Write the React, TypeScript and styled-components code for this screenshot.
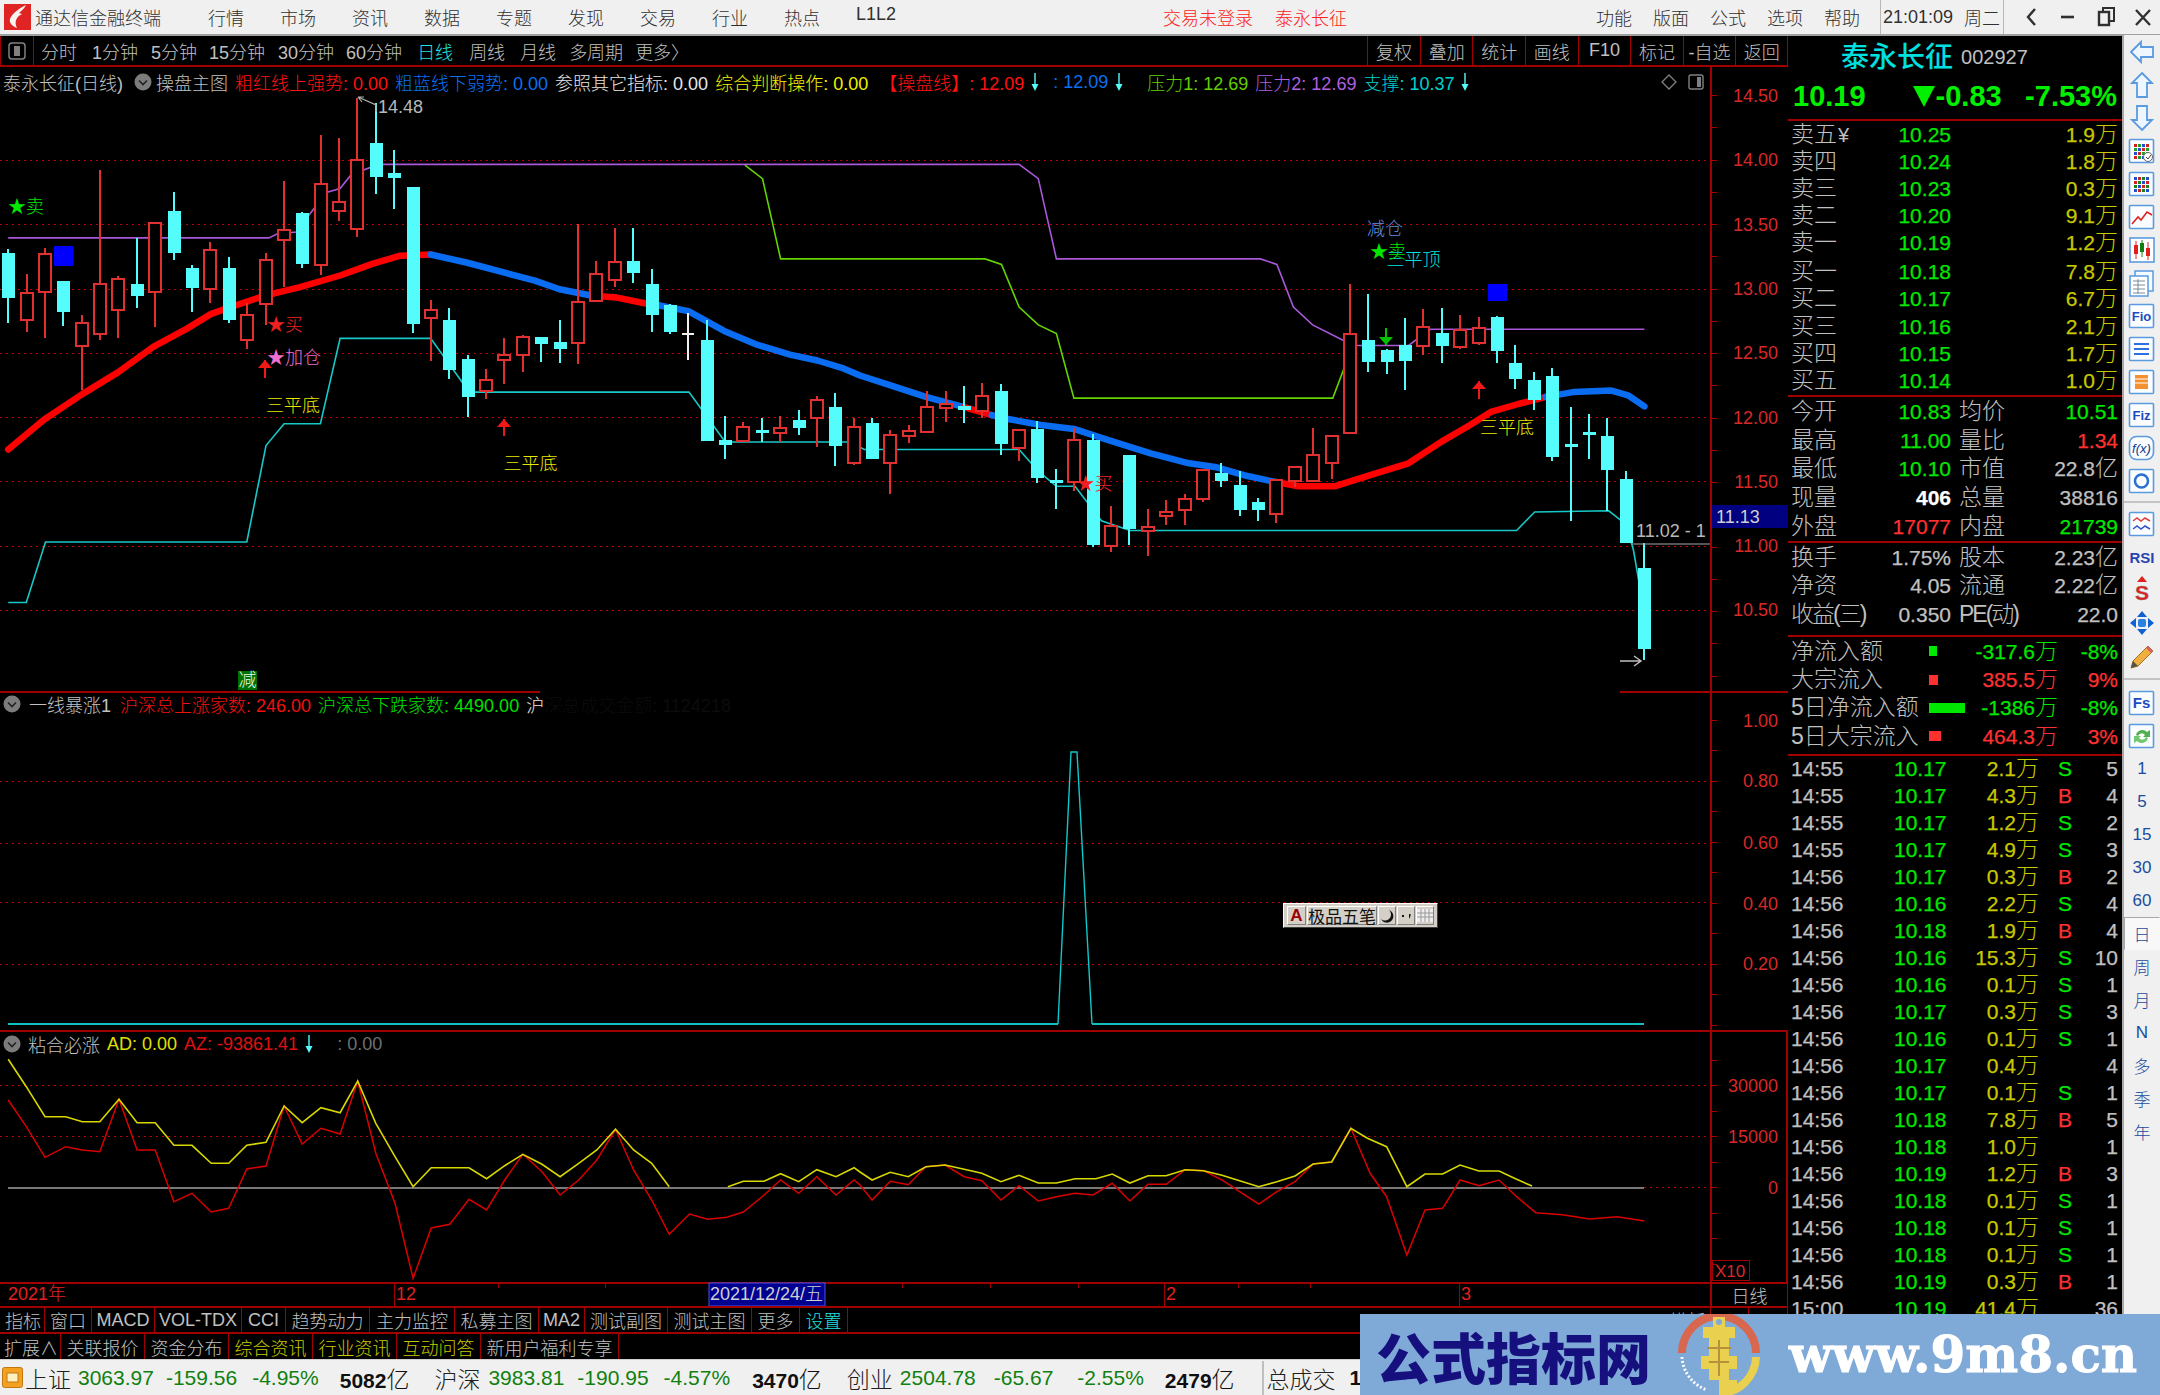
import React from 'react';
import styled, { createGlobalStyle } from 'styled-components';

const FONT = `"Liberation Sans", "Noto Sans CJK SC", sans-serif`;
const DARK_RED = '#a00000';
const GRAY = '#c0c0c0';
const GREEN = '#00e800';
const YELLOW = '#c8c800';
const RED = '#ff3030';
const CYAN = '#54fcfc';

const GlobalStyle = createGlobalStyle`
  html, body { margin: 0; padding: 0; background: #000; }
  body { font-family: ${FONT}; font-weight: 300; }
  svg { display: block; }
`;

const Screen = styled.div`
  position: relative;
  width: 2160px;
  height: 1395px;
  overflow: hidden;
  display: flex;
  flex-direction: column;
  background: #000;
`;

/* ---------- title bar ---------- */
const TitleBar = styled.div`
  height: 34px;
  flex: none;
  display: flex;
  align-items: center;
  background: #f0f0f0;
  border-bottom: 2px solid #a0a0a0;
  font-size: 18px;
  color: #303030;
`;
const AppName = styled.span`
  margin-left: 4px;
  width: 137px;
`;
const MenuList = styled.div`
  display: flex;
  gap: 36px;
  margin-left: 36px;
`;
const MenuItem = styled.span`
  width: 36px;
  white-space: nowrap;
`;
const LoginNote = styled.span<{ $ml: number }>`
  color: #ff2020;
  margin-left: ${(p) => p.$ml}px;
  white-space: nowrap;
`;
const RightCluster = styled.div`
  margin-left: auto;
  display: flex;
  align-items: center;
  height: 100%;
`;
const SideMenu = styled.div`
  display: flex;
  gap: 21px;
  margin-right: 20px;
`;
const ClockBox = styled.div`
  height: 100%;
  width: 124px;
  box-sizing: border-box;
  display: flex;
  align-items: center;
  gap: 11px;
  padding-left: 2px;
  border-left: 1px solid #b8b8b8;
  border-right: 1px solid #b8b8b8;
  white-space: nowrap;
`;
const WindowButtons = styled.div`
  width: 156px;
  display: flex;
  justify-content: flex-end;
  align-items: center;
`;

/* ---------- body ---------- */
const Body = styled.div`
  height: 1323px;
  flex: none;
  display: flex;
  background: #000;
`;
const MainColumn = styled.div`
  width: 1788px;
  flex: none;
  display: flex;
  flex-direction: column;
`;

const Toolbar = styled.div`
  height: 29px;
  flex: none;
  display: flex;
  align-items: center;
  border-bottom: 2px solid ${DARK_RED};
  color: ${GRAY};
  font-size: 18px;
`;
const ToolIcon = styled.div`
  width: 34px;
  height: 100%;
  flex: none;
  display: flex;
  align-items: center;
  justify-content: center;
  box-sizing: border-box;
  border-left: 1px solid ${DARK_RED};
  border-right: 1px solid ${DARK_RED};
`;
const Period = styled.span<{ $ml: number; $on?: boolean }>`
  margin-left: ${(p) => p.$ml}px;
  color: ${(p) => (p.$on ? '#20e0e0' : GRAY)};
  white-space: nowrap;
`;
const ButtonStrip = styled.div`
  margin-left: auto;
  display: flex;
  height: 100%;
`;
const StripButton = styled.div`
  width: 52.6px;
  box-sizing: border-box;
  display: flex;
  align-items: center;
  justify-content: center;
  border-left: 1px solid ${DARK_RED};
  white-space: nowrap;
  &:last-child { border-right: 1px solid ${DARK_RED}; }
`;

const Pane = styled.div<{ $h: number }>`
  position: relative;
  height: ${(p) => p.$h}px;
  flex: none;
`;
const PaneHeader = styled.div<{ $h: number; $top?: number }>`
  position: absolute;
  left: 3px;
  top: ${(p) => p.$top || 0}px;
  height: ${(p) => p.$h}px;
  display: flex;
  align-items: center;
  gap: 7px;
  font-size: 18px;
  white-space: nowrap;
`;
const Legend = styled.span<{ $c: string; $ml?: number }>`
  color: ${(p) => p.$c};
  margin-left: ${(p) => p.$ml || 0}px;
`;
const ImeBar = styled.div`
  position: absolute;
  left: 1283px;
  top: 212px;
  width: 155px;
  height: 25px;
  box-sizing: border-box;
  display: flex;
  align-items: stretch;
  gap: 1px;
  padding: 2px 3px;
  background: #d4d0c8;
  border: 1px solid;
  border-color: #fff #404040 #404040 #fff;
  color: #111;
  font-size: 17px;
`;
const ImeCell = styled.div<{ $w: number; $c?: string }>`
  width: ${(p) => p.$w}px;
  box-sizing: border-box;
  display: flex;
  align-items: center;
  justify-content: center;
  border: 1px solid;
  border-color: #fff #808080 #808080 #fff;
  color: ${(p) => p.$c || '#111'};
  font-weight: ${(p) => (p.$c ? 700 : 400)};
  white-space: nowrap;
`;

const ChartText = styled.text<{ $c: string; $s?: number }>`
  fill: ${(p) => p.$c};
  font-size: ${(p) => p.$s || 18}px;
  font-family: ${FONT};
  dominant-baseline: central;
`;

const TimeRow = styled.div`
  height: 24px;
  flex: none;
  display: flex;
`;
const TimeCell = styled.div`
  width: 78px;
  box-sizing: border-box;
  display: flex;
  align-items: center;
  justify-content: center;
  color: ${GRAY};
  font-size: 18px;
  border-top: 2px solid ${DARK_RED};
  border-left: 2px solid ${DARK_RED};
  border-right: 1px solid ${DARK_RED};
`;
const TabBar = styled.div<{ $h: number }>`
  height: ${(p) => p.$h}px;
  flex: none;
  box-sizing: border-box;
  display: flex;
  padding-left: 2px;
  border-top: 2px solid ${DARK_RED};
  font-size: 18px;
`;
const Tab = styled.div<{ $w: number; $c?: string }>`
  width: ${(p) => p.$w}px;
  box-sizing: border-box;
  display: flex;
  align-items: center;
  justify-content: center;
  color: ${(p) => p.$c || GRAY};
  border-right: 1px solid ${DARK_RED};
  white-space: nowrap;
  overflow: hidden;
`;
const TabEnd = styled.div`
  margin-left: auto;
  display: flex;
`;

/* ---------- quote panel ---------- */
const QuotePanel = styled.div`
  width: 334px;
  flex: none;
  overflow: hidden;
  display: flex;
  flex-direction: column;
  color: ${GRAY};
`;
const NameBlock = styled.div`
  height: 83px;
  flex: none;
  display: flex;
  flex-direction: column;
  border-bottom: 2px solid ${DARK_RED};
`;
const NameRow = styled.div`
  height: 38px;
  display: flex;
  align-items: center;
  padding-left: 53px;
`;
const StockName = styled.span`
  font-size: 28px;
  font-weight: 500;
  color: #00e0e0;
`;
const StockCode = styled.span`
  font-size: 20px;
  margin-left: 8px;
  margin-top: 4px;
`;
const PriceRow = styled.div`
  flex: 1;
  display: flex;
  align-items: center;
  padding: 0 5px;
  font-size: 29px;
  font-weight: 700;
  color: #00f000;
`;
const PriceChange = styled.span`
  margin-left: 47px;
  display: flex;
  align-items: center;
  gap: 1px;
  white-space: nowrap;
`;
const PricePct = styled.span`
  margin-left: auto;
`;
const Section = styled.div<{ $h: number; $line?: string }>`
  height: ${(p) => p.$h}px;
  flex: none;
  box-sizing: border-box;
  padding: 0 4px 0 3px;
  border-bottom: 2px solid ${(p) => p.$line || DARK_RED};
  ${(p) => (p.$line === 'split' ? 'border-image: linear-gradient(to right, #b08030 57%, #2a70b0 57%) 1;' : '')}
`;
const QuoteRow = styled.div<{ $h: number }>`
  height: ${(p) => p.$h}px;
  display: grid;
  grid-template-columns: 160px 159px;
  column-gap: 8px;
  align-items: center;
`;
const PairCell = styled.div`
  display: flex;
  justify-content: space-between;
  align-items: center;
  white-space: nowrap;
`;
const Caption = styled.span<{ $tight?: boolean }>`
  font-size: 23px;
  line-height: 1;
  color: ${GRAY};
  letter-spacing: ${(p) => (p.$tight ? '-2px' : 'normal')};
`;
const Num = styled.span<{ $c?: string; $bold?: boolean }>`
  font-size: 21px;
  line-height: 1;
  color: ${(p) => p.$c || GRAY};
  font-weight: ${(p) => (p.$bold ? 700 : 400)};
  -webkit-text-stroke: 0.25px ${(p) => p.$c || GRAY};
  white-space: nowrap;
`;
const Unit = styled.span`
  font-size: 23px;
  -webkit-text-stroke: 0;
  font-weight: 300;
`;
const RightNum = styled(Num)`
  justify-self: end;
`;
const Yen = styled.span`
  font-size: 20px;
  margin-left: 1px;
`;
const FlowRow = styled.div`
  height: 28.4px;
  display: grid;
  grid-template-columns: 138px 129px 1fr;
  align-items: center;
`;
const FlowMiddle = styled.div`
  display: flex;
  align-items: center;
  justify-content: space-between;
`;
const FlowBar = styled.i<{ $w: number; $c: string }>`
  display: block;
  width: ${(p) => p.$w}px;
  height: 10px;
  background: ${(p) => p.$c};
`;
const TickList = styled.div`
  padding: 0 4px 0 3px;
  margin-top: -1px;
`;
const TickRow = styled.div`
  height: 27px;
  display: grid;
  grid-template-columns: 103px 52px 93px 45px 1fr;
  align-items: center;
`;
const TickFlag = styled(Num)`
  margin-left: 19px;
`;

/* ---------- right rail ---------- */
const SideRail = styled.div`
  flex: 1;
  box-sizing: border-box;
  display: flex;
  flex-direction: column;
  background: #f0f0f0;
  border-left: 2px solid #a8a8a8;
  margin-top: -1px;
`;
const RailItem = styled.div<{ $on?: boolean }>`
  height: 33px;
  flex: none;
  display: flex;
  align-items: center;
  justify-content: center;
  font-size: 17px;
  color: #1a4c9c;
  box-sizing: border-box;
  ${(p) => (p.$on ? 'background:#f8f8f8;border:1px solid;border-color:#a8a8a8 #f8f8f8 #f8f8f8 #a8a8a8;' : '')}
`;
const RailGap = styled.div<{ $h: number }>`
  height: ${(p) => p.$h}px;
  flex: none;
  display: flex;
  align-items: center;
  &::after {
    content: '';
    display: block;
    width: 100%;
    height: 2px;
    background: #c4c4c4;
  }
`;

/* ---------- status bar ---------- */
const StatusBar = styled.div`
  height: 36px;
  flex: none;
  display: flex;
  align-items: center;
  padding-left: 2px;
  background: #f0f0f0;
  border-top: 1px solid #d0d0d0;
  box-sizing: border-box;
  white-space: nowrap;
  color: #202020;
`;
const StatusName = styled.span<{ $ml: number }>`
  font-size: 23px;
  margin-left: ${(p) => p.$ml}px;
`;
const StatusNum = styled.span<{ $ml: number; $strong?: boolean }>`
  font-size: 21px;
  margin-left: ${(p) => p.$ml}px;
  color: ${(p) => (p.$strong ? '#101010' : '#108010')};
  font-weight: ${(p) => (p.$strong ? 700 : 400)};
`;
const StatusDivider = styled.span`
  width: 2px;
  height: 34px;
  margin-left: 27px;
  margin-right: 3px;
  background: #c0c0c0;
`;

/* ---------- watermark ---------- */
const Watermark = styled.div`
  position: absolute;
  left: 1360px;
  right: 0;
  bottom: 0;
  height: 81px;
  display: flex;
  align-items: center;
  background: #7fa9d7;
  padding-left: 16px;
`;
const WaterTitle = styled.span`
  font-family: "Noto Sans CJK SC", sans-serif;
  font-size: 55px;
  font-weight: 900;
  color: #16107e;
  white-space: nowrap;
`;
const WaterUrl = styled.span`
  font-family: "DejaVu Serif", serif;
  font-size: 50px;
  font-weight: 700;
  color: #fff;
  -webkit-text-stroke: 1px #fff;
  margin-left: 28px;
  white-space: nowrap;
`;
const WaterMark = styled.svg`
  margin-left: 26px;
  flex: none;
`;

/* ---------- data, read off the chart ---------- */
const sx = (x: number) => x / 1.823;
const ex = (x: number) => 860 + x / 1.823;
const my = (y: number) => 60 + y / 2.529;
const ly = (y: number) => 1020 + y / 3;
const pts = (list: number[][], fx: (n: number) => number, fy: (n: number) => number) =>
  list.map(([x, y]) => `${fx(x).toFixed(1)},${fy(y).toFixed(1)}`).join(' ');

// kind (0 cyan, 1 red, 2 white), high, body top, body bottom, low
const CANDLES: number[][] = [
  [0,478,487,603,665],[1,540,590,658,688],[1,475,491,587,702],[0,558,558,637,672],[1,645,665,723,835],
  [1,278,567,693,707],[1,545,555,632,702],[0,450,566,598,627],[1,410,411,587,675],[0,335,383,489,505],
  [0,518,525,577,638],[1,460,480,579,615],[0,497,525,657,665],[1,615,646,709,732],[1,487,506,617,670],
  [1,305,430,454,575],[0,385,388,516,527],[1,190,313,518,543],[1,197,358,381,406],[1,95,252,427,447],
  [0,110,209,295,338],[0,228,285,299,376],[0,320,320,668,690],[1,607,632,652,760],[0,627,657,785,808],
  [0,745,755,853,903],[1,782,810,837,857],[1,702,745,758,820],[1,695,700,747,790],[0,700,700,717,763],
  [0,657,714,732,767],[1,416,612,716,770],[1,508,540,610,610],[1,425,510,556,573],[0,425,509,538,563],
  [0,528,566,645,687],[0,618,619,687,694],[2,640,692,692,758],[0,658,707,964,964],[0,900,960,974,1010],
  [1,915,928,963,963],[0,905,935,941,965],[1,900,931,944,965],[0,885,911,930,948],[1,851,859,906,978],
  [0,843,877,975,1028],[1,905,928,1020,1025],[0,905,919,1010,1010],[1,935,949,1019,1097],[1,923,939,950,968],
  [1,837,878,940,940],[1,838,870,879,915],[0,825,875,884,918],[1,816,851,887,905],[0,820,836,971,998],
  [1,935,935,982,1013],[0,912,934,1058,1070],[0,1035,1063,1071,1135],[1,930,962,1066,1090],[0,945,960,1226,1232],
  [1,1128,1178,1228,1245],[0,998,998,1186,1226],[1,1135,1182,1190,1255],[1,1112,1143,1152,1176],[1,1097,1110,1137,1176],
  [1,1037,1038,1110,1118],[0,1018,1044,1065,1080],[0,1040,1075,1138,1153],[0,1108,1117,1138,1165],[1,1060,1061,1148,1172],
  [1,1030,1030,1065,1080],[1,930,1000,1065,1065],[1,950,950,1019,1060],[1,567,692,943,943],[0,592,708,765,790],
  [0,730,733,765,793],[0,652,722,762,835],[1,630,674,723,745],[0,627,691,724,767],[1,645,682,727,732],
  [1,650,677,716,720],[0,648,649,736,767],[0,722,767,808,832],[0,790,809,860,885],[0,778,798,1005,1013],
  [0,878,972,978,1165],[0,896,942,945,1010],[0,905,952,1036,1140],[0,1040,1059,1222,1222],[0,1222,1284,1490,1518],
];

const MA_SEGMENTS: { c: string; a: number[][]; b: number[][] }[] = [
  { c: '#ff0000', a: [[15,985],[80,910],[150,845],[215,790],[280,725],[340,680],[385,642],[430,620],[470,602],[500,590],[545,575],[620,545],[680,515],[730,495],[785,492]], b: [] },
  { c: '#0a6cf0', a: [[785,492],[850,512],[920,538],[975,558],[1020,580],[1080,596]], b: [] },
  { c: '#ff0000', a: [[1080,596],[1125,601],[1175,615],[1200,620]], b: [] },
  { c: '#0a6cf0', a: [[1200,620],[1255,635],[1320,685],[1380,720],[1440,745],[1490,760]], b: [[-30,780],[0,798],[60,825],[120,852],[190,878]] },
  { c: '#ff0000', a: [], b: [[190,878],[240,898]] },
  { c: '#0a6cf0', a: [], b: [[240,898],[270,908],[330,923],[390,933],[450,960],[530,995],[600,1020],[650,1030],[700,1050],[760,1068]] },
  { c: '#ff0000', a: [], b: [[760,1068],[800,1078],[865,1078],[930,1050],[1000,1020],[1060,965],[1110,925],[1150,890],[1200,870],[1250,852]] },
  { c: '#0a6cf0', a: [], b: [[1250,852],[1300,840],[1370,836],[1400,848],[1430,876]] },
];

const toPoints = (a: number[][], b: number[][]) =>
  [pts(a, sx, my), pts(b, ex, my)].filter(Boolean).join(' ');

const PURPLE_LINE = toPoints(
  [[15,450],[490,450],[505,440],[540,435],[570,380],[595,335],[620,325],[640,290],[690,264]],
  [[290,264],[325,300],[358,503],[730,503],[760,517],[790,625],[825,670],[885,712],[905,722],[1000,722],[1040,681],[1430,681]],
);
const GREEN_LINE = toPoints(
  [[1358,266],[1390,300],[1423,503]],
  [[228,503],[258,517],[290,625],[325,670],[358,692],[390,855],[862,855],[885,770]],
);
const SUPPORT_LINE = toPoints(
  [[15,1372],[48,1372],[83,1219],[450,1219],[485,975],[518,920],[584,920],[620,704],[785,704],[840,810],[854,840],[1256,840],[1322,966]],
  [[-20,966],[8,985],[290,985],[325,1040],[358,1078],[392,1078],[440,1165],[492,1190],[1197,1190],[1230,1143],[1365,1140],[1397,1175],[1410,1240],[1420,1320]],
);

const YELLOW_A = pts([[15,118],[48,200],[82,290],[120,290],[150,305],[182,305],[217,238],[250,308],[283,308],[317,376],[350,376],[385,430],[417,430],[450,376],[485,367],[518,258],[551,308],[585,263],[620,278],[652,183],[685,310],[720,410],[753,500],[786,443],[855,443],[887,476],[920,437],[953,403],[988,433],[1021,470],[1055,430],[1088,390],[1122,328],[1155,390],[1188,430],[1220,500]], sx, ly);
const YELLOW_B = [
  pts([[1327,500],[1355,484],[1393,484],[1423,461],[1456,485],[1489,449],[1524,470],[1557,443]], sx, ly),
  pts([[0,456],[22,480],[55,457],[88,470],[120,440],[155,435],[190,448],[222,460],[257,485],[290,466],[325,489],[358,489],[392,476],[430,476],[460,462],[492,489],[525,467],[558,467],[593,449],[626,452],[660,466],[692,482],[727,500],[760,485],[793,468],[826,432],[860,426],[895,325],[925,355],[960,380],[997,500],[1030,462],[1062,462],[1094,435],[1128,453],[1165,453],[1197,478],[1225,498]], ex, ly),
].join(' ');
const RED_OSC = [
  pts([[15,240],[48,320],[82,412],[120,380],[150,390],[182,395],[217,238],[250,390],[283,390],[317,545],[350,520],[385,576],[417,565],[450,447],[485,438],[518,258],[551,372],[585,325],[620,342],[652,183],[685,400],[720,550],[753,775],[786,624],[820,613],[855,538],[887,570],[920,480],[953,403],[988,455],[1021,525],[1055,480],[1088,420],[1122,328],[1155,450],[1188,540],[1220,643],[1257,582],[1290,598],[1325,592],[1355,576],[1393,525],[1423,480],[1456,520],[1489,470],[1524,525],[1557,480]], sx, ly),
  pts([[0,495],[22,540],[55,484],[88,494],[120,440],[155,435],[190,470],[222,482],[257,540],[290,497],[325,543],[358,530],[392,520],[425,525],[460,490],[492,543],[525,493],[558,493],[593,449],[626,452],[660,480],[692,515],[727,552],[760,515],[793,485],[826,432],[860,426],[895,325],[930,460],[960,530],[997,705],[1030,570],[1062,565],[1094,480],[1128,497],[1165,480],[1197,530],[1232,578],[1280,584],[1330,597],[1380,590],[1430,603]], ex, ly),
].join(' ');

const MAIN_LABELS: [string, number][] = [['14.50',95.5],['14.00',160],['13.50',224.5],['13.00',289],['12.50',353],['12.00',417.5],['11.50',482],['11.00',546],['10.50',610]];
const VOL_LABELS: [string, number][] = [['1.00',720.5],['0.80',781],['0.60',843],['0.40',904],['0.20',964]];
const OSC_LABELS: [string, number][] = [['30000',1086],['15000',1137],['0',1188]];

const SELLS = [['卖五','10.25','1.9万'],['卖四','10.24','1.8万'],['卖三','10.23','0.3万'],['卖二','10.20','9.1万'],['卖一','10.19','1.2万']];
const BUYS = [['买一','10.18','7.8万'],['买二','10.17','6.7万'],['买三','10.16','2.1万'],['买四','10.15','1.7万'],['买五','10.14','1.0万']];
const STATS: [string, string, string, string, string, string][] = [
  ['今开','10.83',GREEN,'均价','10.51',GREEN],
  ['最高','11.00',GREEN,'量比','1.34',RED],
  ['最低','10.10',GREEN,'市值','22.8亿',GRAY],
  ['现量','406','#fff','总量','38816',GRAY],
  ['外盘','17077',RED,'内盘','21739',GREEN],
];
const CAPITAL: [string, string, string, string][] = [
  ['换手','1.75%','股本','2.23亿'],
  ['净资','4.05','流通','2.22亿'],
  ['收益(三)','0.350','PE(动)','22.0'],
];
const FLOWS: [string, number, string, string, string][] = [
  ['净流入额',8,GREEN,'-317.6万','-8%'],
  ['大宗流入',9,RED,'385.5万','9%'],
  ['5日净流入额',36,GREEN,'-1386万','-8%'],
  ['5日大宗流入',12,RED,'464.3万','3%'],
];
const TICKS: [string, string, string, string, string][] = [
  ['14:55','10.17','2.1','S','5'],['14:55','10.17','4.3','B','4'],['14:55','10.17','1.2','S','2'],['14:55','10.17','4.9','S','3'],
  ['14:56','10.17','0.3','B','2'],['14:56','10.16','2.2','S','4'],['14:56','10.18','1.9','B','4'],['14:56','10.16','15.3','S','10'],
  ['14:56','10.16','0.1','S','1'],['14:56','10.17','0.3','S','3'],['14:56','10.16','0.1','S','1'],['14:56','10.17','0.4','','4'],
  ['14:56','10.17','0.1','S','1'],['14:56','10.18','7.8','B','5'],['14:56','10.18','1.0','','1'],['14:56','10.19','1.2','B','3'],
  ['14:56','10.18','0.1','S','1'],['14:56','10.18','0.1','S','1'],['14:56','10.18','0.1','S','1'],['14:56','10.19','0.3','B','1'],
  ['15:00','10.19','41.4','','36'],
];
const PERIODS: [string, number, boolean?][] = [['分时',7],['1分钟',15],['5分钟',13],['15分钟',12],['30分钟',13],['60分钟',12],['日线',15,true],['周线',16],['月线',15],['多周期',13],['更多〉',12]];
const STRIP = ['复权','叠加','统计','画线','F10','标记','-自选','返回'];
const TABS_A: [string, number, string?][] = [['指标',43],['窗口',47],['MACD',63],['VOL-TDX',87],['CCI',44],['趋势动力',84],['主力监控',85],['私募主图',84],['MA2',46],['测试副图',83],['测试主图',84],['更多',48],['设置',48,'#20e0e0']];
const TABS_B: [string, number, string?][] = [['扩展∧',59],['关联报价',84],['资金分布',84],['综合资讯',84,YELLOW],['行业资讯',84,YELLOW],['互动问答',84,YELLOW],['新用户福利专享',138]];

/* ---------- small drawings ---------- */
const withUnit = (s: string) => {
  const last = s[s.length - 1];
  if (last === '万' || last === '亿') return <>{s.slice(0, -1)}<Unit>{last}</Unit></>;
  return s;
};

const ChevronDot = () => (
  <svg width="18" height="18" viewBox="0 0 18 18">
    <circle cx="9" cy="9" r="8.5" fill="#7c7c7c" />
    <path d="M5 7.5 L9 11.5 L13 7.5" fill="none" stroke="#222" strokeWidth="1.6" />
  </svg>
);
const DownTick = () => (
  <svg width="8" height="18" viewBox="0 0 8 18">
    <path d="M4 0 V13" stroke={CYAN} strokeWidth="1.4" />
    <path d="M0.5 11 H7.5 L4 18 Z" fill={CYAN} />
  </svg>
);
const Logo = () => (
  <svg width="27" height="26" viewBox="0 0 27 26" style={{ marginLeft: 4 }}>
    <rect width="27" height="26" fill="#e02424" />
    <path d="M22 1 C16 4 8 9 6 15 C5 19 8 22 13 24 C10 18 12 13 18 10 L15 9 C18 6 21 4 22 1 Z" fill="#f8f4f0" />
  </svg>
);
const ChartArrow = ({ x, y1, y2, c, down }: { x: number; y1: number; y2: number; c: string; down?: boolean }) => (
  <g>
    <line x1={x} x2={x} y1={y1} y2={y2} stroke={c} strokeWidth="2" />
    {down
      ? <path d={`M${x - 7} ${y2 - 8} H${x + 7} L${x} ${y2} Z`} fill={c} />
      : <path d={`M${x - 7} ${y1 + 8} H${x + 7} L${x} ${y1} Z`} fill={c} />}
  </g>
);

const RailFrame = ({ children, r = 1 }: { children?: React.ReactNode; r?: number }) => (
  <svg width="30" height="30" viewBox="0 0 30 30">
    <rect x="2.5" y="3.5" width="24" height="23" rx={r} fill="#fbfdff" stroke="#5a9be0" strokeWidth="1.6" />
    {children}
  </svg>
);
const FrameText = ({ t, s = 14, c = '#1a4cc0' }: { t: string; s?: number; c?: string }) => (
  <text x="14.5" y="20" textAnchor="middle" fontSize={s} fill={c} fontFamily={FONT} fontWeight="700">{t}</text>
);
const dotGrid = (colors: string[]) =>
  [0, 1, 2, 3].flatMap((r) => [0, 1, 2, 3].map((c) => (
    <rect key={`${r}${c}`} x={7 + c * 4} y={8 + r * 4} width="3" height="3" fill={colors[(r + c) % colors.length]} />
  )));

const RAIL_ICONS: React.ReactNode[] = [
  <svg width="30" height="30" viewBox="0 0 30 30"><path d="M4 15 L14 5 V10 H26 V20 H14 V25 Z" fill="#eef6ff" stroke="#5a9be0" strokeWidth="1.8" /></svg>,
  <svg width="30" height="30" viewBox="0 0 30 30"><path d="M15 3 L25 13 H20 V27 H10 V13 H5 Z" fill="#eef6ff" stroke="#5a9be0" strokeWidth="1.8" /></svg>,
  <svg width="30" height="30" viewBox="0 0 30 30"><path d="M15 27 L25 17 H20 V3 H10 V17 H5 Z" fill="#eef6ff" stroke="#5a9be0" strokeWidth="1.8" /></svg>,
  <RailFrame>{dotGrid(['#d02020','#20a020','#2050d0'])}<circle cx="21" cy="21" r="4.5" fill="#fff" stroke="#666" /><path d="M19 21 L21 23 L24 19" stroke="#444" fill="none" /></RailFrame>,
  <RailFrame>{dotGrid(['#2050d0','#d02020','#208020'])}</RailFrame>,
  <RailFrame><path d="M5 22 L11 15 L14 18 L20 10 L25 13" fill="none" stroke="#e02020" strokeWidth="1.6" /></RailFrame>,
  <svg width="30" height="30" viewBox="0 0 30 30"><rect x="3" y="3" width="24" height="24" fill="#fff" stroke="#5a9be0" strokeWidth="1.6" /><path d="M9 6 V24" stroke="#e02020" /><rect x="7" y="10" width="4" height="9" fill="#e02020" /><path d="M15 5 V22" stroke="#108010" /><rect x="13" y="8" width="4" height="9" fill="#108010" /><path d="M21 7 V25" stroke="#e02020" /><rect x="19" y="13" width="4" height="8" fill="#e02020" /></svg>,
  <svg width="30" height="30" viewBox="0 0 30 30"><rect x="8" y="3" width="18" height="20" fill="#f4faff" stroke="#5a9be0" strokeWidth="1.5" /><rect x="3" y="8" width="18" height="20" fill="#fff" stroke="#5a9be0" strokeWidth="1.5" /><path d="M6 13 H18 M6 17 H18 M6 21 H18 M6 25 H18 M11 11 V26" stroke="#7a8a9a" /></svg>,
  <RailFrame><FrameText t="Fio" s={13} /></RailFrame>,
  <RailFrame><path d="M7 10 H22 M7 15 H22 M7 20 H22" stroke="#2a70e0" strokeWidth="2" /></RailFrame>,
  <RailFrame><rect x="8" y="8" width="13" height="14" fill="#f59030" /><path d="M8 12 H21 M8 16 H21" stroke="#fff" /></RailFrame>,
  <RailFrame><FrameText t="Fiz" s={13} /></RailFrame>,
  <RailFrame r={7}><text x="14.5" y="20" textAnchor="middle" fontSize="13" fontStyle="italic" fill="#103a90" fontFamily={FONT}>f(x)</text></RailFrame>,
  <RailFrame><circle cx="14.5" cy="15" r="6.5" fill="none" stroke="#2a70d0" strokeWidth="2.5" /></RailFrame>,
  <RailFrame><path d="M6 12 L10 9 L14 12 L18 9 L23 12" fill="none" stroke="#e04040" strokeWidth="1.5" /><path d="M6 20 L10 17 L14 20 L18 17 L23 20" fill="none" stroke="#3050d0" strokeWidth="1.5" /></RailFrame>,
  <svg width="30" height="30" viewBox="0 0 30 30"><text x="15" y="21" textAnchor="middle" fontSize="15" fontWeight="700" fill="#2a44b0" fontFamily={FONT}>RSI</text></svg>,
  <svg width="30" height="30" viewBox="0 0 30 30"><path d="M15 1 L20 7 H10 Z" fill="#e02020" /><text x="15" y="25" textAnchor="middle" fontSize="21" fontWeight="700" fill="#e02020" stroke="#888" strokeWidth=".4" fontFamily={FONT}>S</text></svg>,
  <svg width="30" height="30" viewBox="0 0 30 30"><path d="M15 3 L20 9 H10 Z M15 27 L10 21 H20 Z M3 15 L9 10 V20 Z M27 15 L21 20 V10 Z" fill="#1060d0" /><rect x="11" y="11" width="8" height="8" rx="2" fill="#2a80e0" /></svg>,
  <svg width="30" height="30" viewBox="0 0 30 30"><path d="M6 20 L21 5 L26 10 L11 25 L4 27 Z" fill="#f0b040" stroke="#a87020" /><path d="M21 5 L26 10 L24 12 L19 7 Z" fill="#d86060" /><path d="M4 27 L6 20 L11 25 Z" fill="#554" /></svg>,
  <RailFrame><FrameText t="Fs" s={15} /></RailFrame>,
  <RailFrame><path d="M9 14 A6.5 6.5 0 0 1 20 11 L23 9 V16 H16 L18 14 A4 4 0 0 0 11 15 Z" fill="#50b050" /><path d="M21 17 A6.5 6.5 0 0 1 10 20 L7 22 V15 H14 L12 17 A4 4 0 0 0 19 16 Z" fill="#70c870" /></RailFrame>,
];
const RAIL_TEXT = ['1','5','15','30','60','日','周','月','N','多','季','年'];

/* ---------- chart panes ---------- */
const AxisLabels = ({ labels }: { labels: [string, number][] }) => (
  <>
    {labels.map(([t, y]) => (
      <ChartText key={t} $c="#d82828" x="1778" y={y} textAnchor="end">{t}</ChartText>
    ))}
  </>
);
const GridLines = ({ ys, x2 = 1710 }: { ys: number[]; x2?: number }) => (
  <g shapeRendering="crispEdges">
    {ys.map((y) => (
      <line key={y} x1="0" x2={x2} y1={y} y2={y} stroke="#c00000" strokeDasharray="2 4" />
    ))}
  </g>
);
const AxisRule = ({ y1, y2, step, from }: { y1: number; y2: number; step: number; from: number }) => {
  const ticks: number[] = [];
  for (let y = from; y < y2; y += step) ticks.push(y);
  return (
    <g shapeRendering="crispEdges">
      <line x1="1711" x2="1711" y1={y1} y2={y2} stroke={DARK_RED} strokeWidth="2" />
      {ticks.map((y) => <line key={y} x1="1711" x2="1717" y1={y} y2={y} stroke={DARK_RED} />)}
    </g>
  );
};

const MainChart = () => (
  <svg width="1788" height="624" viewBox="0 67 1788 624">
    <GridLines ys={[160, 224.5, 289, 353, 417.5, 481.5, 546, 610]} />
    <AxisRule y1={67} y2={691} step={32.25} from={95.5} />
    <AxisLabels labels={MAIN_LABELS} />
    <polyline points={PURPLE_LINE} fill="none" stroke="#a858d8" strokeWidth="1.6" />
    <polyline points={GREEN_LINE} fill="none" stroke="#64d400" strokeWidth="1.6" />
    <polyline points={SUPPORT_LINE} fill="none" stroke="#18c8c8" strokeWidth="1.6" />
    {MA_SEGMENTS.map((seg, i) => (
      <polyline key={i} points={toPoints(seg.a, seg.b)} fill="none" stroke={seg.c} strokeWidth="6.5" strokeLinecap="round" strokeLinejoin="round" />
    ))}
    <g shapeRendering="crispEdges">
      {CANDLES.map(([k, hi, top, bot, lo], i) => {
        const x = Math.round(8.2 + 18.38 * i);
        const c = k === 0 ? CYAN : k === 1 ? '#e03030' : '#f0f0f0';
        const t = Math.round(my(top));
        const b = Math.round(my(bot));
        return (
          <g key={i}>
            <line x1={x} x2={x} y1={my(hi)} y2={t} stroke={c} strokeWidth="1.4" />
            <line x1={x} x2={x} y1={b} y2={my(lo)} stroke={c} strokeWidth="1.4" />
            {k === 2
              ? <line x1={x - 6} x2={x + 6} y1={t} y2={t} stroke={c} strokeWidth="1.4" />
              : k === 0
                ? <rect x={x - 6.5} y={t} width="13" height={Math.max(b - t, 3)} fill={c} />
                : <rect x={x - 6} y={t} width="12" height={Math.max(b - t, 3)} fill="#000" stroke={c} strokeWidth="1.6" />}
          </g>
        );
      })}
    </g>
    <rect x="54" y="246" width="19.5" height="20" fill="#0000ff" />
    <rect x="1488" y="284" width="19" height="17" fill="#0000ff" />
    <path d="M358 97 L362 102 M358 97 L364 97 M358 97 L376 105 V112" fill="none" stroke="#b0b0b0" strokeWidth="1.2" />
    <ChartText $c="#b8b8b8" x="378" y="106.5">14.48</ChartText>
    <ChartText $c="#00e800" x="8" y="207">★卖</ChartText>
    <ChartText $c="#f02020" x="267" y="325">★买</ChartText>
    <ChartText $c="#f070d0" x="267" y="358">★加仓</ChartText>
    <ChartArrow x={265} y1={360} y2={378} c="#f01818" />
    <ChartText $c="#e8e800" x="266" y="406">三平底</ChartText>
    <ChartArrow x={504} y1={419} y2={436} c="#f01818" />
    <ChartText $c="#e8e800" x="503.5" y="464">三平底</ChartText>
    <rect x="238" y="671" width="19" height="19" fill="#007000" />
    <ChartText $c="#e8f8e8" x="238.5" y="680">减</ChartText>
    <ChartText $c="#6090e0" x="1367" y="229">减仓</ChartText>
    <ChartText $c="#00e0e0" x="1386.5" y="260">三平顶</ChartText>
    <ChartText $c="#00e800" x="1370" y="252">★卖</ChartText>
    <ChartArrow x={1386} y1={328} y2={345} c="#00c000" down />
    <ChartArrow x={1479} y1={381} y2={399} c="#f01818" />
    <ChartText $c="#e8e800" x="1480" y="428">三平底</ChartText>
    <ChartText $c="#f02020" x="1076.5" y="484">★买</ChartText>
    <ChartText $c="#b8b8b8" x="1636" y="530.5">11.02 - 1</ChartText>
    <line x1="1632" x2="1710" y1="544" y2="544" stroke="#a8a8a8" />
    <path d="M1620 661 H1640 M1634 656 L1641 661 L1634 666" fill="none" stroke="#c0c0c0" strokeWidth="1.4" />
    <rect x="1712" y="505" width="76" height="23" fill="#000080" />
    <ChartText $c="#d0d0d0" x="1716" y="516.5">11.13</ChartText>
    <path d="M1669 75 L1676 82 L1669 89 L1662 82 Z" fill="none" stroke="#808080" strokeWidth="1.3" />
    <rect x="1689" y="75" width="14" height="14" rx="2" fill="none" stroke="#808080" strokeWidth="1.4" />
    <rect x="1697" y="77" width="4" height="10" fill="#808080" />
  </svg>
);

const VolumeChart = () => (
  <svg width="1788" height="339" viewBox="0 691 1788 339">
    <g shapeRendering="crispEdges">
      <line x1="0" x2="540" y1="691.5" y2="691.5" stroke={DARK_RED} strokeWidth="2" />
      <line x1="1620" x2="1788" y1="691.5" y2="691.5" stroke={DARK_RED} strokeWidth="2" />
    </g>
    <GridLines ys={[781, 843, 902, 964]} />
    <AxisRule y1={691} y2={1030} step={30.5} from={720} />
    <AxisLabels labels={VOL_LABELS} />
    <rect x="8" y="1023" width="1050" height="2" fill="#10c0c0" />
    <rect x="1092" y="1023" width="552" height="2" fill="#10c0c0" />
    <polyline points="1058,1024 1071,752 1077,752 1092,1024" fill="none" stroke="#10c8c8" strokeWidth="1.4" />
  </svg>
);

const OscillatorChart = () => (
  <svg width="1788" height="252" viewBox="0 1030 1788 252">
    <g shapeRendering="crispEdges">
      <line x1="0" x2="1788" y1="1031" y2="1031" stroke={DARK_RED} strokeWidth="2" />
      <line x1="1787" x2="1787" y1="1030" y2="1282" stroke={DARK_RED} strokeWidth="2" />
    </g>
    <GridLines ys={[1085.5, 1136.5]} />
    <line x1="1644" x2="1710" y1="1187.5" y2="1187.5" stroke="#c00000" strokeDasharray="2 4" shapeRendering="crispEdges" />
    <AxisRule y1={1030} y2={1282} step={25.5} from={1060} />
    <AxisLabels labels={OSC_LABELS} />
    <line x1="8" x2="1644" y1="1187.5" y2="1187.5" stroke="#787878" strokeWidth="2" shapeRendering="crispEdges" />
    <polyline points={RED_OSC} fill="none" stroke="#d80000" strokeWidth="1.5" />
    <polyline points={YELLOW_A} fill="none" stroke="#d8d800" strokeWidth="1.6" />
    <polyline points={YELLOW_B} fill="none" stroke="#d8d800" strokeWidth="1.6" />
    <rect x="1712.5" y="1260.5" width="37" height="20" fill="none" stroke={DARK_RED} shapeRendering="crispEdges" />
    <ChartText $c="#d82828" $s={17} x="1715" y="1271">X10</ChartText>
  </svg>
);

const TimeAxis = () => (
  <svg width="1710" height="24" viewBox="0 1282 1710 24">
    <g shapeRendering="crispEdges" stroke={DARK_RED}>
      <line x1="0" x2="1710" y1="1283" y2="1283" strokeWidth="2" />
      {[394, 1164, 1459].map((x) => <line key={x} x1={x} x2={x} y1="1282" y2="1306" />)}
      {[498, 605, 902, 990, 1078, 1238, 1310].map((x) => <line key={x} x1={x} x2={x} y1="1282" y2="1288" />)}
    </g>
    <ChartText $c="#e02020" x="8" y="1294">2021年</ChartText>
    <ChartText $c="#e02020" x="396" y="1294">12</ChartText>
    <ChartText $c="#e02020" x="1166" y="1294">2</ChartText>
    <ChartText $c="#e02020" x="1461" y="1294">3</ChartText>
    <rect x="709" y="1283" width="116" height="23" fill="#000090" stroke="#5050e0" />
    <ChartText $c="#d0d0d0" x="710" y="1294">2021/12/24/五</ChartText>
  </svg>
);

/* ---------- page ---------- */
const QuoteLines = ({ rows, h }: { rows: string[][]; h: number }) => (
  <>
    {rows.map(([label, price, vol]) => (
      <QuoteRow key={label} $h={h}>
        <PairCell>
          <Caption>{label}{label === '卖五' && <Yen>¥</Yen>}</Caption>
          <Num $c={GREEN}>{price}</Num>
        </PairCell>
        <RightNum $c={YELLOW}>{withUnit(vol)}</RightNum>
      </QuoteRow>
    ))}
  </>
);

export default function App() {
  return (
    <Screen>
      <GlobalStyle />
      <TitleBar>
        <Logo />
        <AppName>通达信金融终端</AppName>
        <MenuList>
          {['行情','市场','资讯','数据','专题','发现','交易','行业','热点','L1L2'].map((m) => <MenuItem key={m}>{m}</MenuItem>)}
        </MenuList>
        <LoginNote $ml={271}>交易未登录</LoginNote>
        <LoginNote $ml={22}>泰永长征</LoginNote>
        <RightCluster>
          <SideMenu>
            {['功能','版面','公式','选项','帮助'].map((m) => <MenuItem key={m}>{m}</MenuItem>)}
          </SideMenu>
          <ClockBox><span>21:01:09</span><span>周二</span></ClockBox>
          <WindowButtons>
            <svg width="156" height="26" viewBox="0 0 156 26">
              <path d="M31 5 L24 13 L31 21" fill="none" stroke="#303030" strokeWidth="2.4" />
              <path d="M57 13 H70" stroke="#303030" strokeWidth="2.6" />
              <rect x="95" y="8" width="10" height="13" fill="none" stroke="#303030" strokeWidth="2.4" />
              <path d="M99 8 V4 H110 V17 H105" fill="none" stroke="#303030" strokeWidth="2" />
              <path d="M132 6 L146 21 M146 6 L132 21" stroke="#303030" strokeWidth="2.4" />
            </svg>
          </WindowButtons>
        </RightCluster>
      </TitleBar>

      <Body>
        <MainColumn>
          <Toolbar>
            <ToolIcon>
              <svg width="18" height="18" viewBox="0 0 18 18">
                <rect x="1" y="1" width="16" height="16" rx="3" fill="none" stroke="#808080" strokeWidth="1.5" />
                <rect x="6" y="4" width="6" height="10" fill="#808080" />
              </svg>
            </ToolIcon>
            {PERIODS.map(([t, ml, on]) => <Period key={t} $ml={ml} $on={on}>{t}</Period>)}
            <ButtonStrip>
              {STRIP.map((t) => <StripButton key={t}>{t}</StripButton>)}
            </ButtonStrip>
          </Toolbar>

          <Pane $h={624}>
            <MainChart />
            <PaneHeader $h={30}>
              <Legend $c={GRAY}>泰永长征(日线)</Legend>
              <Legend $c={GRAY} $ml={4}><ChevronDot /></Legend>
              <Legend $c={GRAY} $ml={-3}>操盘主图</Legend>
              <Legend $c="#ff1010">粗红线上强势: 0.00</Legend>
              <Legend $c="#0a70f0">粗蓝线下弱势: 0.00</Legend>
              <Legend $c="#e8e8e8">参照其它指标: 0.00</Legend>
              <Legend $c="#f0f000">综合判断操作: 0.00</Legend>
              <Legend $c="#ff1010" $ml={4}>【操盘线】: 12.09</Legend>
              <DownTick />
              <Legend $c="#0a70f0" $ml={7}>: 12.09</Legend>
              <DownTick />
              <Legend $c="#60d000" $ml={17}>压力1: 12.69</Legend>
              <Legend $c="#b060e0">压力2: 12.69</Legend>
              <Legend $c="#00d0d0">支撑: 10.37</Legend>
              <DownTick />
            </PaneHeader>
          </Pane>

          <Pane $h={339}>
            <VolumeChart />
            <PaneHeader $h={26}>
              <ChevronDot />
              <Legend $c={GRAY} $ml={1}>一线暴涨1</Legend>
              <Legend $c="#f01010" $ml={2}>沪深总上涨家数: 246.00</Legend>
              <Legend $c="#00e000">沪深总下跌家数: 4490.00</Legend>
              <Legend $c="#e8e8e8">沪</Legend>
              <Legend $c="#0c0c0c" $ml={-7}>深总成交金额: 1124218</Legend>
            </PaneHeader>
            <ImeBar>
              <ImeCell $w={20} $c="#a00000">A</ImeCell>
              <ImeCell $w={72}>极品五笔</ImeCell>
              <ImeCell $w={19}>
                <svg width="14" height="14" viewBox="0 0 14 14"><path d="M9 1 A6.5 6.5 0 1 1 1 10 A6 6 0 0 0 9 1 Z" fill="#111" /></svg>
              </ImeCell>
              <ImeCell $w={19}>
                <svg width="10" height="8" viewBox="0 0 10 8"><rect x="1" y="3" width="2" height="2" fill="#111" /><path d="M8 2 H9.5 V4 L8 7 Z" fill="#111" /></svg>
              </ImeCell>
              <ImeCell $w={18}>
                <svg width="16" height="13" viewBox="0 0 16 13"><rect width="16" height="13" fill="#eee" /><path d="M0 4 H16 M0 8 H16 M4 0 V13 M8 0 V13 M12 0 V13" stroke="#999" /></svg>
              </ImeCell>
            </ImeBar>
          </Pane>

          <Pane $h={252}>
            <OscillatorChart />
            <PaneHeader $h={26} $top={1}>
              <ChevronDot />
              <Legend $c={GRAY} $ml={0}>粘合必涨</Legend>
              <Legend $c="#e0e000">AD: 0.00</Legend>
              <Legend $c="#e01010">AZ: -93861.41</Legend>
              <DownTick />
              <Legend $c="#707070" $ml={17}>: 0.00</Legend>
            </PaneHeader>
          </Pane>

          <TimeRow>
            <TimeAxis />
            <TimeCell>日线</TimeCell>
          </TimeRow>

          <TabBar $h={26}>
            {TABS_A.map(([t, w, c]) => <Tab key={t} $w={w} $c={c}>{t}</Tab>)}
            <TabEnd>
              <Tab $w={46}>模板</Tab>
              <Tab $w={38}>▲</Tab>
              <Tab $w={39}> </Tab>
            </TabEnd>
          </TabBar>
          <TabBar $h={27}>
            {TABS_B.map(([t, w, c]) => <Tab key={t} $w={w} $c={c}>{t}</Tab>)}
          </TabBar>
        </MainColumn>

        <QuotePanel>
          <NameBlock>
            <NameRow>
              <StockName>泰永长征</StockName>
              <StockCode>002927</StockCode>
            </NameRow>
            <PriceRow>
              <span>10.19</span>
              <PriceChange>
                <svg width="22" height="21" viewBox="0 0 22 21"><path d="M0 0 H22 L11 21 Z" fill="#00f000" /></svg>
                -0.83
              </PriceChange>
              <PricePct>-7.53%</PricePct>
            </PriceRow>
          </NameBlock>
          <Section $h={137} $line="split"><QuoteLines rows={SELLS} h={27} /></Section>
          <Section $h={139}><QuoteLines rows={BUYS} h={27.3} /></Section>
          <Section $h={146}>
            {STATS.map(([a, b, bc, c, d, dc]) => (
              <QuoteRow key={a} $h={28.8}>
                <PairCell><Caption>{a}</Caption><Num $c={bc} $bold={a === '现量'}>{b}</Num></PairCell>
                <PairCell><Caption>{c}</Caption><Num $c={dc}>{withUnit(d)}</Num></PairCell>
              </QuoteRow>
            ))}
          </Section>
          <Section $h={94}>
            {CAPITAL.map(([a, b, c, d]) => (
              <QuoteRow key={a} $h={28.6}>
                <PairCell><Caption $tight={a.includes('(')}>{a}</Caption><Num>{b}</Num></PairCell>
                <PairCell><Caption $tight={c.includes('(')}>{c}</Caption><Num>{withUnit(d)}</Num></PairCell>
              </QuoteRow>
            ))}
          </Section>
          <Section $h={119}>
            {FLOWS.map(([label, w, c, val, pct]) => (
              <FlowRow key={label}>
                <Caption>{label}</Caption>
                <FlowMiddle>
                  <FlowBar $w={w} $c={c} />
                  <Num $c={c === GREEN ? GREEN : RED}>{withUnit(val)}</Num>
                </FlowMiddle>
                <RightNum $c={c === GREEN ? GREEN : RED}>{pct}</RightNum>
              </FlowRow>
            ))}
          </Section>
          <TickList>
            {TICKS.map(([time, price, vol, flag, count], i) => (
              <TickRow key={i}>
                <Num>{time}</Num>
                <Num $c={GREEN}>{price}</Num>
                <RightNum $c={YELLOW}>{vol}<Unit>万</Unit></RightNum>
                <TickFlag $c={flag === 'B' ? RED : GREEN}>{flag}</TickFlag>
                <RightNum>{count}</RightNum>
              </TickRow>
            ))}
          </TickList>
        </QuotePanel>

        <SideRail>
          {RAIL_ICONS.slice(0, 14).map((icon, i) => <RailItem key={i}>{icon}</RailItem>)}
          <RailGap $h={10} />
          {RAIL_ICONS.slice(14, 19).map((icon, i) => <RailItem key={i}>{icon}</RailItem>)}
          <RailGap $h={14} />
          {RAIL_ICONS.slice(19).map((icon, i) => <RailItem key={i}>{icon}</RailItem>)}
          {RAIL_TEXT.map((t) => <RailItem key={t} $on={t === '日'}>{t}</RailItem>)}
        </SideRail>
      </Body>

      <StatusBar>
        <svg width="21" height="21" viewBox="0 0 21 21">
          <rect x="0.5" y="0.5" width="20" height="20" rx="2" fill="#f4a020" stroke="#c07810" />
          <rect x="5" y="6" width="11" height="9" fill="#fff0c0" stroke="#c07810" />
        </svg>
        <StatusName $ml={2}>上证</StatusName>
        <StatusNum $ml={7}>3063.97</StatusNum>
        <StatusNum $ml={12}>-159.56</StatusNum>
        <StatusNum $ml={15}>-4.95%</StatusNum>
        <StatusNum $ml={21} $strong>5082<Unit>亿</Unit></StatusNum>
        <StatusName $ml={25}>沪深</StatusName>
        <StatusNum $ml={8}>3983.81</StatusNum>
        <StatusNum $ml={13}>-190.95</StatusNum>
        <StatusNum $ml={15}>-4.57%</StatusNum>
        <StatusNum $ml={22} $strong>3470<Unit>亿</Unit></StatusNum>
        <StatusName $ml={25}>创业</StatusName>
        <StatusNum $ml={7}>2504.78</StatusNum>
        <StatusNum $ml={18}>-65.67</StatusNum>
        <StatusNum $ml={24}>-2.55%</StatusNum>
        <StatusNum $ml={21} $strong>2479<Unit>亿</Unit></StatusNum>
        <StatusDivider />
        <StatusName $ml={0}>总成交</StatusName>
        <StatusNum $ml={14} $strong>1</StatusNum>
      </StatusBar>

      <Watermark>
        <WaterTitle>公式指标网</WaterTitle>
        <WaterMark width="84" height="81" viewBox="0 0 84 81">
          <path d="M5 39 A37 37 0 0 1 79 39" fill="none" stroke="#d8674f" strokeWidth="8" />
          <path d="M79 43 A37 37 0 0 1 42 79" fill="none" stroke="#ead04f" strokeWidth="8" />
          <path d="M5 43 A37 37 0 0 0 30 76" fill="none" stroke="#fff" strokeWidth="3" strokeDasharray="2 2" />
          <path d="M36 3 H48 V13 H58 V24 H52 V42 H60 V55 H52 V66 H60 V76 H42 V66 H32 V55 H24 V42 H32 V24 H26 V13 H36 Z" fill="#ead04f" />
          <circle cx="42" cy="8" r="3" fill="#7fa9d7" />
          <path d="M30 34 H54 M32 48 H52 M42 26 V62" stroke="#b88f3a" strokeWidth="2" />
        </WaterMark>
        <WaterUrl>www.9m8.cn</WaterUrl>
      </Watermark>
    </Screen>
  );
}
